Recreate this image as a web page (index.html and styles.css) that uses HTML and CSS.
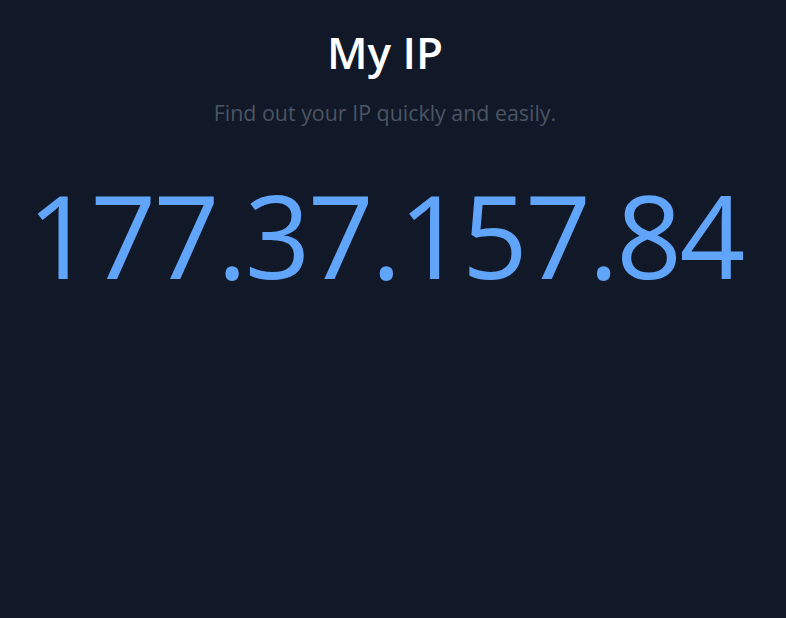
FILE: index.html
```html
<!DOCTYPE html>
<html lang="en">
<head>
<meta charset="utf-8">
<title>My IP</title>
<link rel="stylesheet" href="styles.css">
</head>
<body>
<main class="page">
  <h1 class="title">My IP</h1>
  <p class="subtitle">Find out your IP quickly and easily.</p>
  <div class="ip">177.37.157.84</div>
</main>
</body>
</html>
```

FILE: styles.css
```css
html, body {
  margin: 0;
  padding: 0;
  background: #111827;
  height: 100%;
}
body {
  font-family: "Open Sans", "Noto Sans", sans-serif;
}
.page {
  display: flex;
  flex-direction: column;
  align-items: center;
  padding: 24px 16px 0 0;
}
.title {
  margin: 0;
  color: #ffffff;
  font-size: 44px;
  font-weight: 600;
  line-height: 56px;
}
.subtitle {
  margin: 19px 0 0;
  color: #4b5563;
  font-size: 21.4px;
  line-height: 28px;
}
.ip {
  margin-top: 43px;
  color: #60a5fa;
  font-size: 115px;
  line-height: 130px;
  letter-spacing: -2.5px;
}
```
